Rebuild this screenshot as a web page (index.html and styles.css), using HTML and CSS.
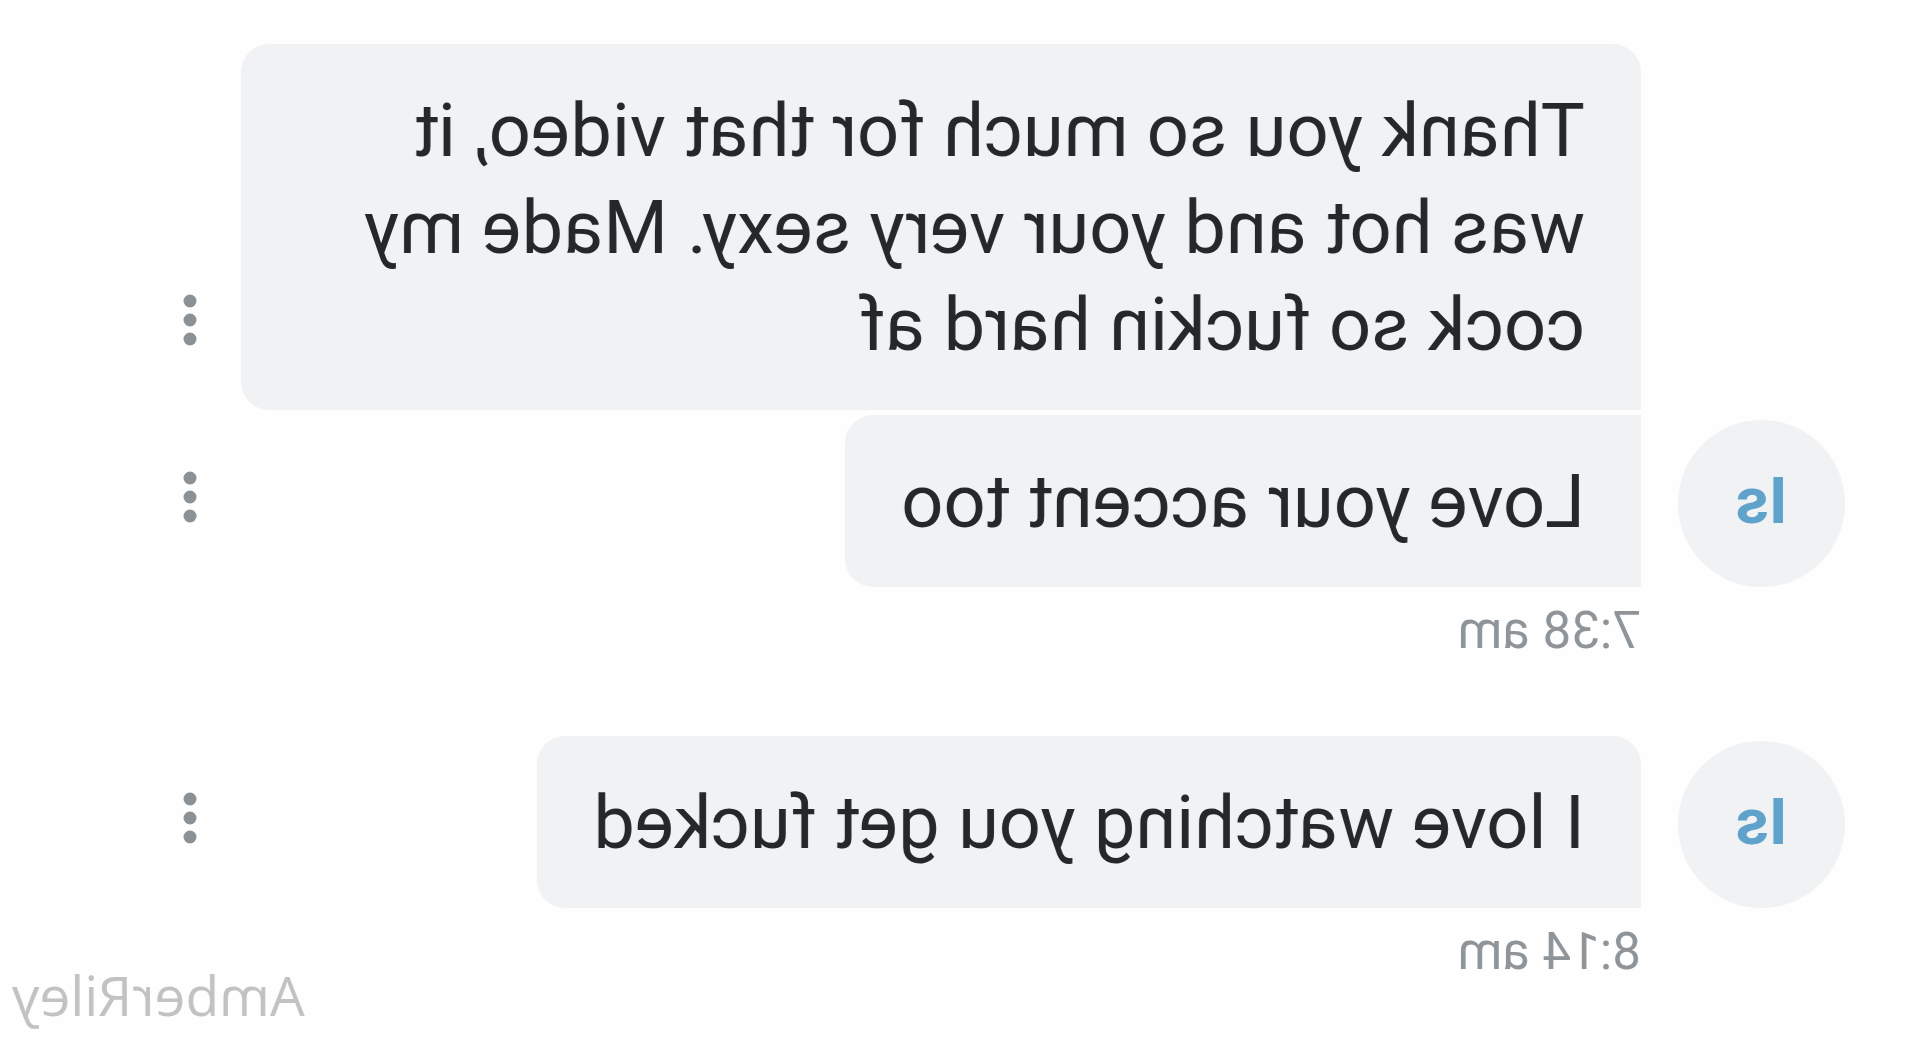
FILE: index.html
```html
<!DOCTYPE html>
<html lang="en">
<head>
    <meta charset="UTF-8">
    <meta name="viewport" content="width=device-width, initial-scale=1.0">
    <title>Messages</title>
    <link rel="stylesheet" href="styles.css">
</head>
<body>
    <main class="chat">
        <!-- First group -->
        <section class="group">
            <div class="message">
                <div class="avatar-space"></div>
                <p class="bubble first">Thank you so much for that video, it was hot and your very sexy. Made my cock so fuckin hard af</p>
                <button class="menu" type="button" aria-label="Message options">
                    <svg viewBox="0 0 60 60"><circle cx="30" cy="11" r="6.5"/><circle cx="30" cy="30" r="6.5"/><circle cx="30" cy="49" r="6.5"/></svg>
                </button>
            </div>
            <div class="message">
                <div class="avatar">Is</div>
                <p class="bubble">Love your accent too</p>
                <button class="menu" type="button" aria-label="Message options">
                    <svg viewBox="0 0 60 60"><circle cx="30" cy="11" r="6.5"/><circle cx="30" cy="30" r="6.5"/><circle cx="30" cy="49" r="6.5"/></svg>
                </button>
            </div>
            <time class="time" datetime="07:38">7:38 am</time>
        </section>

        <!-- Second group -->
        <section class="group">
            <div class="message">
                <div class="avatar">Is</div>
                <p class="bubble first">I love watching you get fucked</p>
                <button class="menu" type="button" aria-label="Message options">
                    <svg viewBox="0 0 60 60"><circle cx="30" cy="11" r="6.5"/><circle cx="30" cy="30" r="6.5"/><circle cx="30" cy="49" r="6.5"/></svg>
                </button>
            </div>
            <time class="time" datetime="08:14">8:14 am</time>
        </section>

        <div class="watermark">AmberRiley</div>
    </main>
</body>
</html>
```
FILE: styles.css
```css
* {
    box-sizing: border-box;
}
body {
    margin: 0;
    background-color: #fefefe;
    font-family: Roboto, Arial, sans-serif;
}
/* the whole conversation is flipped left to right */
.chat {
    position: relative;
    min-height: 100vh;
    padding: 44px 160px 0 74px;
    transform: scaleX(-1);
}
.group {
    display: flex;
    flex-direction: column;
    gap: 5px;
    margin-bottom: 73px;
}
.group:last-of-type {
    margin-bottom: 0;
}
.message {
    display: flex;
    align-items: flex-end;
}
.avatar,
.avatar-space {
    flex: none;
    width: 167px;
    margin-right: 37px;
}
.avatar {
    display: flex;
    align-items: center;
    justify-content: center;
    height: 167px;
    padding-bottom: 6px;
    border-radius: 50%;
    background: #f1f2f4;
    color: #5fa2cb;
    font-size: 65px;
    font-weight: bold;
}
.bubble {
    margin: 0 auto 0 0;
    padding: 38px 56px 37px;
    border-radius: 0 28px 28px 0;
    background: #f1f2f4;
    color: #252729;
    font-size: 74px;
    line-height: 97px;
}
.bubble.first {
    border-top-left-radius: 28px;
}
.menu {
    flex: none;
    width: 60px;
    height: 60px;
    margin: 0 0 60px 21px;
    padding: 0;
    border: none;
    background: none;
    cursor: pointer;
}
.menu svg {
    display: block;
    fill: #8c9196;
}
.time {
    margin: 7px 0 0 204px;
    color: #8f9499;
    font-size: 51px;
    line-height: 64px;
}
.watermark {
    position: absolute;
    right: 12px;
    bottom: 16px;
    color: #c2c2c2;
    font-family: "Open Sans", Arial, sans-serif;
    font-size: 55px;
    line-height: 66px;
}
```
